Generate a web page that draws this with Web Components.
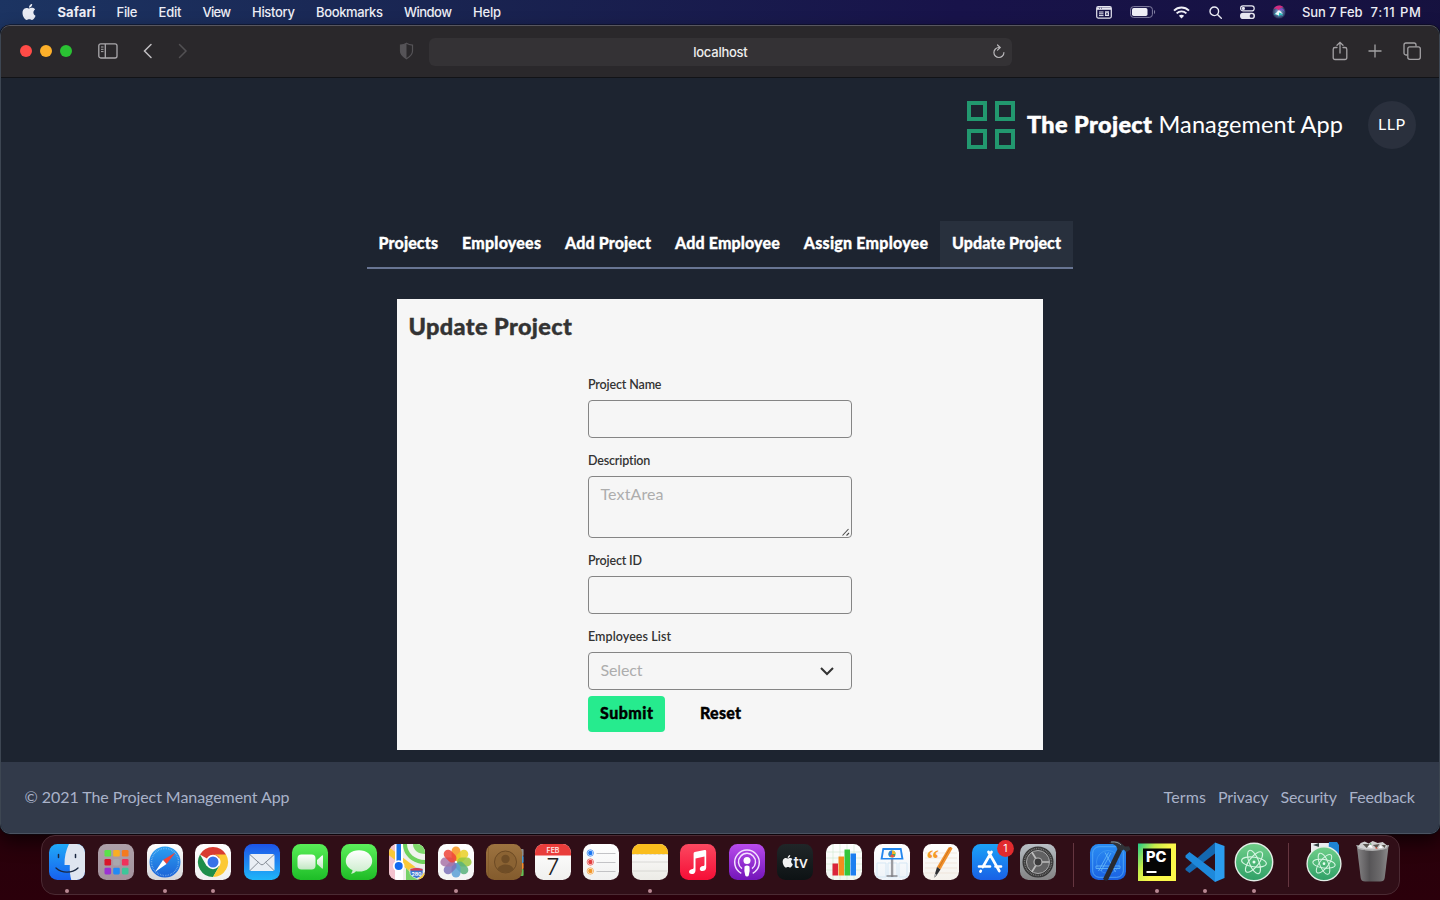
<!DOCTYPE html>
<html lang="en">
<head>
<meta charset="utf-8">
<title>The Project Management App</title>
<style>
html,body{margin:0;width:1440px;height:900px;overflow:hidden}
body{background:linear-gradient(100deg,#1c3462 0,#192350 30%,#18134a 60%,#15113c 100%)}
desktop-screen{font-family:Inter,"Liberation Sans",sans-serif}
</style>
</head>
<body>
<desktop-screen></desktop-screen>
<script>
const APPLE='M12.152 6.896c-.948 0-2.415-1.078-3.96-1.04-2.04.027-3.91 1.183-4.961 3.014-2.117 3.675-.546 9.103 1.519 12.09 1.013 1.454 2.208 3.09 3.792 3.039 1.52-.065 2.09-.987 3.935-.987 1.831 0 2.35.987 3.96.948 1.637-.026 2.676-1.48 3.676-2.948 1.156-1.688 1.636-3.325 1.662-3.415-.039-.013-3.182-1.221-3.22-4.857-.026-3.04 2.48-4.494 2.597-4.559-1.429-2.09-3.623-2.324-4.39-2.376-2-.156-3.675 1.09-4.61 1.09zM15.53 3.83c.843-1.012 1.4-2.427 1.245-3.83-1.207.052-2.662.805-3.532 1.818-.78.896-1.454 2.338-1.273 3.714 1.338.104 2.715-.688 3.559-1.701';

function define(name, html, setup){
  customElements.define(name, class extends HTMLElement{
    constructor(){
      super();
      this.attachShadow({mode:'open'}).innerHTML=html;
    }
    connectedCallback(){ if(setup) setup.call(this,this.shadowRoot); }
  });
}

/* One line of text, tracked so that it fills the width given in "w". */
define('fit-text','<style>:host{display:inline-block;white-space:nowrap;flex:none}span{display:inline-block}</style><span><slot></slot></span>',function(root){
  const w=parseFloat(this.getAttribute('w')), s=root.querySelector('span');
  this.style.width=w+'px';
  const n=this.textContent.length-1;
  s.style.letterSpacing='0px';
  const natural=s.getBoundingClientRect().width;
  if(natural && n>0) s.style.letterSpacing=((w-natural)/n).toFixed(3)+'px';
});

define('menu-bar',`<style>
:host{display:flex;height:25px;box-sizing:border-box;padding:0 19px 1px 22px;align-items:center;color:#edeef6;font-size:13px;line-height:22px;font-weight:500}
nav{display:flex;gap:21px;margin-left:21.500px}
.right{display:flex;align-items:center;margin-left:auto}
nav,.clock{margin-top:-1px}
svg{display:block;flex:none}
b{font-weight:700}
</style>
<svg width="14" height="16" viewBox="1.5 0 21 24" fill="#e9ebf3"><path d="${APPLE}"/></svg>
<nav><fit-text w="38"><b>Safari</b></fit-text><fit-text w="21">File</fit-text><fit-text w="23">Edit</fit-text><fit-text w="28.500">View</fit-text><fit-text w="43">History</fit-text><fit-text w="67">Bookmarks</fit-text><fit-text w="48">Window</fit-text><fit-text w="28">Help</fit-text></nav>
<div class="right">
<svg width="16" height="13" viewBox="0 0 16 13" fill="none" stroke="#e6e6f0"><rect x=".7" y=".7" width="14.6" height="11.4" rx="1.5" stroke-width="1.2"/><path d="M1 2.6h14" stroke-width="2.4"/><path d="M3 2.2h1M5 2.2h1" stroke="#333060" stroke-width=".8"/><path d="M3 6h4.5M3 7.8h4.5M3 9.6h4.5" stroke-width="1"/><path d="M9 5.3h4v4.7h-4z" fill="#e6e6f0" stroke="none"/><path d="M10 6.5l2 2.4m0-2.4l-2 2.4" stroke="#1a144a" stroke-width=".8"/></svg>
<svg style="margin-left:18px" width="26" height="12" viewBox="0 0 26 12"><rect x=".6" y=".6" width="21.8" height="10.8" rx="3" fill="none" stroke="#8582a4"/><rect x="2" y="2" width="15.500" height="8" rx="1.7" fill="#efeff6"/><path d="M24 4v4c1.5-.5 1.5-3.500 0-4" fill="#8582a4"/></svg>
<svg style="margin-left:17px" width="17" height="13" viewBox="0 0 17 13" fill="none" stroke="#f0f0f8" stroke-width="1.9"><path d="M1 4.600c4.200-4.200 10.800-4.200 15 0M3.600 7.400c2.800-2.700 7-2.700 9.800 0"/><path d="M8.500 12.500L5.900 9.700c1.500-1.300 3.700-1.300 5.200 0z" fill="#f0f0f8" stroke="none"/></svg>
<svg style="margin-left:19px" width="13" height="13" viewBox="0 0 13 13" fill="none" stroke="#edeef6" stroke-width="1.400"><circle cx="5.300" cy="5.300" r="4.300"/><path d="M8.500 8.500l3.800 3.800" stroke-linecap="round"/></svg>
<svg style="margin-left:18px" width="15" height="14" viewBox="0 0 15 14"><rect x=".6" y=".9" width="13.600" height="5" rx="2.500" fill="none" stroke="#e9e9f2" stroke-width="1.200"/><circle cx="3.400" cy="3.400" r="1.600" fill="#e9e9f2"/><rect y="7.800" width="15" height="6.200" rx="3.100" fill="#e9e9f2"/><circle cx="11.600" cy="10.900" r="1.900" fill="#28234f"/></svg>
<svg style="margin-left:17px" width="14" height="14" viewBox="0 0 14 14"><defs><radialGradient id="si"><stop offset="0" stop-color="#fff"/><stop offset=".35" stop-color="#6f8dbd"/><stop offset="1" stop-color="#27345a"/></radialGradient></defs><circle cx="7" cy="7" r="6.600" fill="url(#si)"/><path d="M7 6C5 3 2.500 3 1.500 4.500 3 0 9 -.5 11.500 2.500 9 2 7 4 7 6z" fill="#d22a81"/><path d="M7 7c2-3 4-2 5.500 0-1-5-5-5-5.500 0" fill="#7e52ca"/><path d="M7 7c-3 0-4 1-5 3 3-2 4 0 5 2 0-2 2-3 4-1-1-3-2-4-4-4" fill="#25c7c2"/><path d="M3 9l4-4 4 4-4-1.500v3z" fill="#fff" opacity=".9"/></svg>
<fit-text class="clock" w="60.500" style="margin-left:16px">Sun 7 Feb</fit-text><fit-text class="clock" w="50.500" style="margin-left:8px">7:11 PM</fit-text>
</div>`);

define('browser-toolbar',`<style>
:host{display:flex;align-items:center;height:51px;background:#2a282b;border-bottom:1px solid #121317;padding:0 17px 0 19px;box-sizing:content-box}
svg{display:block;flex:none;position:relative;top:-1px}
i{width:12px;height:12px;border-radius:50%;margin-right:8px;margin-top:-1px;flex:none}
.url{width:583px;height:28px;border-radius:6px;background:#343235;margin-left:15px;display:grid;grid-template-columns:30px 1fr 30px;align-items:center;justify-items:center;color:#eee;font-size:13px;font-weight:500;line-height:28px}
.url svg{top:0}
</style>
<i style="background:#ff4b47"></i><i style="background:#fdb02a"></i><i style="background:#2ac233"></i>
<svg style="margin-left:18px" width="20" height="16" viewBox="0 0 20 16" fill="none" stroke="#aaa8ac" stroke-width="1.300"><rect x=".8" y=".8" width="18.200" height="14.200" rx="2"/><path d="M7.300 1v14"/><path d="M3 4h2.500M3 6.300h2.500M3 8.600h2.500" stroke-width="1"/></svg>
<svg style="margin-left:24.500px" width="10" height="16" viewBox="0 0 10 16" fill="none" stroke="#c1bfc2" stroke-width="1.500" stroke-linecap="round"><path d="M8 1.500L1.500 8 8 14.500"/></svg>
<svg style="margin-left:25px" width="10" height="16" viewBox="0 0 10 16" fill="none" stroke="#525053" stroke-width="1.500" stroke-linecap="round"><path d="M1.500 1.500L8 8l-6.500 6.500"/></svg>
<svg style="margin-left:211px" width="15" height="18" viewBox="0 0 15 18"><path d="M7.500 1.200c2 1.300 3.800 1.700 6 1.900v6c0 4-3 6-6 7.600-3-1.600-6-3.600-6-7.600v-6c2.200-.2 4-.6 6-1.900z" fill="none" stroke="#555357" stroke-width="1.200"/><path d="M7.500 1.200v15.500c-3-1.600-6-3.600-6-7.600v-6c2.200-.2 4-.6 6-1.900z" fill="#555357"/></svg>
<div class="url"><span></span><fit-text w="54.500" style="margin-left:1px">localhost</fit-text><svg style="margin-left:5px" width="14" height="16" viewBox="0 0 14 16" fill="none" stroke="#b9b7ba" stroke-width="1.200" stroke-linecap="round" stroke-linejoin="round"><path d="M11.900 8.500a5 5 0 1 1-5-5h1"/><path d="M5.500 1l2.700 2.500-2.700 2.600"/></svg></div>
<svg style="margin-left:320.500px" width="16" height="20" viewBox="0 0 16 20" fill="none" stroke="#a3a1a4" stroke-width="1.300" stroke-linecap="round"><path d="M5 6.500H3A1.800 1.800 0 0 0 1.200 8.300v8.400A1.800 1.800 0 0 0 3 18.500h10a1.800 1.800 0 0 0 1.800-1.800V8.300A1.800 1.800 0 0 0 13 6.500h-2M8 12V1.500M5 4.300l3-3 3 3"/></svg>
<svg style="margin-left:20px" width="14" height="14" viewBox="0 0 14 14" stroke="#a3a1a4" stroke-width="1.300"><path d="M7 .5v13M.5 7h13"/></svg>
<svg style="margin-left:21px" width="18" height="18" viewBox="0 0 18 18" fill="none" stroke="#a3a1a4" stroke-width="1.300"><rect x="4.800" y="4.800" width="12.500" height="12.500" rx="2"/><path d="M4.500 13H3a2 2 0 0 1-2-2V3a2 2 0 0 1 2-2h8a2 2 0 0 1 2 2v1.500"/></svg>`);

define('app-header',`<style>
:host{display:flex;justify-content:flex-end;align-items:center;height:48px;padding:23px 23.500px 0 0;color:#fff;font-size:23.500px;line-height:46px}
.mark{display:grid;grid-template-columns:20px 20px;gap:8px;margin-right:12.500px}
.mark i{height:20px;box-sizing:border-box;border:4px solid #22986f}
fit-text{margin-bottom:2px}
b{font-weight:900;-webkit-text-stroke:.5px #fff}
.avatar{width:48px;height:48px;border-radius:50%;background:#2a303d;margin-left:24.500px;text-align:center;font-size:16px;line-height:46px}
</style><div class="mark"><i></i><i></i><i></i><i></i></div><fit-text w="125"><b>The Project</b></fit-text><fit-text w="184.500" style="margin-left:6.500px">Management App</fit-text><div class="avatar"><fit-text w="27">LLP</fit-text></div>`);

define('tab-item',`<style>:host{display:block;padding:0 12px;height:46px;line-height:43px;font-size:16px;font-weight:900;-webkit-text-stroke:.3px #fff;color:#fff}:host([active]){background:#28303d}</style><slot></slot>`);
define('tab-bar',`<style>:host{display:flex;width:706px;margin:72px auto 0;border-bottom:2px solid #687593}
tab-item:first-of-type{padding-left:11.500px}tab-item:last-of-type{flex:1;padding-right:0}</style>
<tab-item><fit-text w="59.500">Projects</fit-text></tab-item><tab-item><fit-text w="79">Employees</fit-text></tab-item><tab-item><fit-text w="86">Add Project</fit-text></tab-item><tab-item><fit-text w="104.800">Add Employee</fit-text></tab-item><tab-item><fit-text w="124.200">Assign Employee</fit-text></tab-item><tab-item active><fit-text w="109">Update Project</fit-text></tab-item>`);

define('form-field',`<style>
:host{display:block;font-size:12.500px}
.label{line-height:21px;height:21px;padding-bottom:5px;color:#333;font-weight:600}
.box{box-sizing:border-box;border:1px solid #858585;border-radius:4px;height:38px;padding:0 12px 0 11.500px;font-size:16px;line-height:34px;color:#adadad;display:flex;justify-content:space-between}
:host([kind=area]) .box{height:62px}
svg{display:none}
:host([kind=area]) .grip{display:block;align-self:flex-end;margin-right:-12px}
:host([kind=select]) .chev{display:block;align-self:center;margin-right:4px}
</style><div class="label"><slot name="label"></slot></div><div class="box"><span><slot></slot></span>
<svg class="grip" width="10" height="10" viewBox="0 0 10 10" stroke="#4a4a4a" stroke-width="1.100"><path d="M1.500 8.500l6-6.500M5.500 8.500l2.500-2.500"/></svg>
<svg class="chev" width="16" height="12" viewBox="0 0 16 12" fill="none" stroke="#333" stroke-width="2"><path d="M2 3l6 6 6-6"/></svg></div>`);

define('update-form',`<style>
:host{display:block;width:646px;height:451px;box-sizing:border-box;margin:30px auto 0;background:#f6f6f6;color:#333;overflow:hidden;padding-top:10px}
h2{margin:0 0 0 11.500px;font-size:23.500px;font-weight:900;line-height:34px;height:36px;-webkit-text-stroke:.4px #333}
form{width:264px;margin:29px auto 0}
form-field{margin-bottom:12px}
form-field:last-of-type{margin-bottom:6px}
.actions{display:flex;align-items:flex-start;color:#000;font-size:16px;font-weight:900;line-height:34px;-webkit-text-stroke:.4px #000}
.submit{width:77px;height:36px;border-radius:4px;background:#26eb8e;text-align:center}
.reset{margin-left:35px}
</style><h2><fit-text w="163.500">Update Project</fit-text></h2>
<form>
<form-field><fit-text slot="label" w="73.500">Project Name</fit-text></form-field>
<form-field kind="area"><fit-text slot="label" w="62.500">Description</fit-text><fit-text w="63">TextArea</fit-text></form-field>
<form-field><fit-text slot="label" w="54">Project ID</fit-text></form-field>
<form-field kind="select"><fit-text slot="label" w="83">Employees List</fit-text><fit-text w="42">Select</fit-text></form-field>
<div class="actions"><div class="submit"><fit-text w="53">Submit</fit-text></div><div class="reset"><fit-text w="41">Reset</fit-text></div></div>
</form>`);

define('app-footer',`<style>
:host{display:flex;align-items:flex-start;justify-content:space-between;height:72px;padding:0 24px 0 23.500px;background:#323a4a;color:#a9b2c9;font-size:16px;line-height:70px;margin-top:12px}
div{display:flex;gap:12px}
</style><fit-text w="265">© 2021 The Project Management App</fit-text><div><fit-text w="42.500">Terms</fit-text><fit-text w="50.500">Privacy</fit-text><fit-text w="56.500">Security</fit-text><fit-text w="66">Feedback</fit-text></div>`);

define('browser-window',`<style>
:host{display:block;height:809px;box-sizing:border-box;border:1px solid #4b4a55;border-color:#57565f #3d4652 #4b5362;border-radius:10px;overflow:hidden;background:#1d2430;box-shadow:0 0 0 .5px #090b14,0 8px 18px rgba(0,0,0,.6)}
.page{font-family:Lato,"Open Sans",sans-serif}
</style><browser-toolbar></browser-toolbar><div class="page"><app-header></app-header><tab-bar></tab-bar><update-form></update-form><app-footer></app-footer></div>`);

const grad=(id,a,b)=>`<defs><linearGradient id="${id}" x2="0" y2="1"><stop stop-color="${a}"/><stop offset="1" stop-color="${b}"/></linearGradient></defs>`;
const tile=(id,a,b)=>grad(id,a,b)+`<rect width="36" height="36" rx="8.500" fill="url(#${id})"/>`;
const clip='<defs><clipPath id="tile"><rect width="36" height="36" rx="8.500"/></clipPath></defs>';
const ATOM=`<g fill="none" stroke="#d6f5e2" stroke-width="1.100"><ellipse cx="18" cy="18" rx="12.500" ry="4.800" transform="rotate(8 18 18)"/><ellipse cx="18" cy="18" rx="12.500" ry="4.800" transform="rotate(68 18 18)"/><ellipse cx="18" cy="18" rx="12.500" ry="4.800" transform="rotate(128 18 18)"/></g><circle cx="18" cy="18" r="1.500" fill="#e8fff1"/>`;
const petals=['#f7941e','#e9cf25','#9bc83c','#58b27b','#5a9fd6','#7c72b8','#a976a8','#ee4438'];
const ICONS={
finder:clip+tile('g','#20a9f8','#1760ee')+`<g clip-path="url(#tile)"><path d="M20 0C17 6 15.300 13 15.500 21h5.300c-.2 6 .3 11 1.500 15H36V0z" fill="#dfe5f0"/></g><path d="M9.500 10.500v3M26.500 10.500v3" stroke="#1a2740" stroke-width="1.500" stroke-linecap="round"/><path d="M7 24c6 5.500 16 5.500 22 0" fill="none" stroke="#1a2740" stroke-width="1.300" stroke-linecap="round"/>`,
launchpad:tile('g','#aea0a9','#a3929d')+['#5ae149','#f9ae24','#f47a20','#d9152b','#a9a7ad','#f0315b','#9b31d3','#218af5','#3cc69a'].map((c,i)=>`<rect x="${6.500+(i%3)*8.700}" y="${6+Math.floor(i/3)*8.900}" width="6.600" height="6.600" rx="1.300" fill="${c}"/>`).join(''),
safari:tile('g','#fff','#d5d5d8')+grad('s','#2ba0f1','#1c62d7')+`<circle cx="18" cy="18" r="15.500" fill="url(#s)"/><circle cx="18" cy="18" r="13.500" fill="none" stroke="#a6d3f7" stroke-width="1.500" stroke-dasharray=".6 1.100" opacity=".7"/><path d="M28.500 8.500L19.500 20 16 16z" fill="#f44336"/><path d="M8 28l8-12 3.500 4z" fill="#fff"/>`,
chrome:tile('g','#fff','#f0f0f0')+`<path d="M18 18L5 10.500A15 15 0 0 1 31 10.500z" fill="#d93c32"/><path d="M5 10.500A15 15 0 0 0 18 33l6.500-11.200L11.500 21.700z" fill="#1e8e4a"/><path d="M18 33l6.500-11.200A7.500 7.500 0 0 0 18 10.500h13A15 15 0 0 1 18 33" fill="#fcc934"/><circle cx="18" cy="18" r="7.200" fill="#fff"/><circle cx="18" cy="18" r="5.500" fill="#3872e8"/>`,
mail:tile('g','#1d54e8','#1fb6f9')+`<rect x="5.500" y="10" width="25" height="17" rx="1.800" fill="#e9eef4"/><path d="M6 10.700l10.500 9.500q1.500 1.300 3 0L30 10.700M6 26.500l8.500-8.300M30 26.500l-8.500-8.300" fill="none" stroke="#858c96" stroke-width="1"/>`,
facetime:tile('g','#59ee57','#1dbd27')+grad('s','#fff','#c2e7c3')+`<rect x="5.500" y="10.500" width="18" height="15" rx="4" fill="url(#s)"/><path d="M25 16l5-4.500q1-.5 1 .8v11.400q0 1.300-1 .8l-5-4.500z" fill="url(#s)"/>`,
messages:tile('g','#5cf05b','#1ebb25')+grad('s','#fff','#caeccb')+`<path d="M18 6.200c7.600 0 13.200 4.700 13.200 10.700S25.600 27.600 18 27.600c-1 0-2-.1-3-.3-1.200 1.300-3 2.300-5 2.400.9-.9 1.500-2.200 1.500-3.600-4-1.800-6.700-5.100-6.700-9.200C4.800 10.900 10.400 6.200 18 6.200z" fill="url(#s)"/>`,
maps:clip+`<g clip-path="url(#tile)"><rect width="36" height="36" fill="#eeeeeb"/><path d="M0 0h9v36H0z" fill="#f3c2ce"/><path d="M14 0h22v20C24 20 14 12 14 0z" fill="#6ed25c"/><path d="M18 0h18v16C26 16 18 9 18 0z" fill="#f1f3ee"/><path d="M24 0h12v10c-7 0-12-4-12-10z" fill="#7fd96b"/><path d="M-2 4l40 31v-9L-2-4z" fill="#f9c938" transform="translate(-1 5)"/><path d="M17 36V24l12 12" fill="#76d267"/><path d="M6 0h8v36H6z" fill="#fff"/><path d="M7.500 0h4.500v20H7.500z" fill="#1a73e8"/></g><circle cx="9.700" cy="22" r="5.800" fill="#fff"/><circle cx="9.700" cy="22" r="4" fill="#1268f0"/><path d="M21 25q6-2.500 13 0v4q0 3-6.500 5.500-6.500-2.500-6.500-5.500z" fill="#3975d0" stroke="#e6edf7" stroke-width=".7"/><path d="M21.500 25q6-2 12 0v1.500h-12z" fill="#da3950"/><text x="27.500" y="31.600" text-anchor="middle" font-size="5.200" font-weight="700" fill="#fff">280</text>`,
photos:tile('g','#fff','#f3f3f3')+petals.map((c,i)=>`<rect x="13.600" y="2.400" width="8.800" height="14.500" rx="4.400" fill="${c}" opacity=".85" transform="rotate(${i*45} 18 18)"/>`).join(''),
contacts:`<rect x="30" y="5" width="7.600" height="7" rx="1" fill="#8e8e8e"/><rect x="30" y="12" width="7.600" height="7" rx="1" fill="#4999d3"/><rect x="30" y="19" width="7.600" height="6" rx="1" fill="#ef8b2e"/><rect x="30" y="25" width="7.600" height="7" rx="1" fill="#63bf55"/>`+tile('g','#9d7340','#835b2d')+`<path d="M2.500 3v30" stroke="#805727" stroke-width="1" opacity=".6"/><circle cx="19.500" cy="18" r="11" fill="#8b6333" stroke="#6c4a24"/><circle cx="19.500" cy="15" r="4.200" fill="#6f4d26"/><path d="M11.500 25c2-6 14-6 16 0-4 5-12 5-16 0z" fill="#6f4d26"/>`,
calendar:clip+tile('g','#fff','#f0f0ee')+`<path d="M0 0h36v11.500H0z" fill="#e93d3b" clip-path="url(#tile)"/><text x="18" y="9" text-anchor="middle" font-size="7" font-weight="600" fill="#ffe5e3">FEB</text><text x="18" y="30.800" text-anchor="middle" font-size="23" font-weight="300" fill="#222">7</text>`,
reminders:tile('g','#fff','#f0f0f0')+['#1c77f2','#e33c3c','#f2962b'].map((c,i)=>`<circle cx="7.300" cy="${9+9*i}" r="3.200" fill="#fff" stroke="${c}" stroke-width=".7"/><circle cx="7.300" cy="${9+9*i}" r="2.200" fill="${c}"/><path d="M13.500 ${9.500+9*i}h19" stroke="#b5b5b9" stroke-width=".8"/>`).join(''),
notes:clip+tile('g','#fff','#ecebe6')+`<path d="M0 0h36v10H0z" fill="#fabd1d" clip-path="url(#tile)"/><path d="M0 18h36M0 27h36" stroke="#d3d2ce" stroke-width=".8"/><path d="M0 10.500h36" stroke="#b8a56f" stroke-width=".6" stroke-dasharray=".6 .7"/>`,
music:tile('g','#fb4860','#f60e36')+`<path d="M13.600 9.600q0-1.200 1.200-1.500l9.800-2q1.600-.3 1.600 1.200v16.200c0 2.300-1.800 3.600-3.700 3.600-1.800 0-2.700-1-2.700-2.200 0-1.700 1.300-2.500 3.200-2.800 1.200-.2 1.500-.6 1.500-1.600V12.600l-9 1.800v12c0 2.300-1.700 3.700-3.700 3.700-1.700 0-2.700-1-2.700-2.300 0-1.600 1.300-2.400 3.200-2.800 1-.2 1.300-.6 1.300-1.600z" fill="#fff"/>`,
podcasts:tile('g','#b94bed','#7315b9')+`<g fill="none" stroke="#f4e2ff" stroke-width="1.500"><path d="M12.300 29.300a12.300 12.300 0 1 1 11.400 0M13 24.700a8.500 8.500 0 1 1 10 0"/></g><circle cx="18" cy="16.500" r="3.500" fill="#fff"/><path d="M15.500 22.500q2.500-1.800 5 0 .7 5-.8 9-.2 1-1.700 1t-1.700-1q-1.500-4-.8-9z" fill="#fff"/>`,
tv:tile('g','#202628','#0d1214')+`<path d="${APPLE}" fill="#f2f2f2" transform="translate(4.500 11) scale(.52)"/><text x="16.500" y="23.600" font-size="16" font-weight="500" textLength="14.500" fill="#f2f2f2">tv</text>`,
numbers:tile('g','#fff','#f1f5ef')+`<path d="M0 8h36M0 14h36M0 20h36M0 26h36M7 0v36M14 0v36M21 0v36M28 0v36" stroke="#cfe7cc" stroke-width=".6"/><path d="M6.500 19.500h5.500v12H6.500z" fill="#db2439"/><path d="M12.500 12.500h5.500v19h-5.500z" fill="#f58c1e"/><path d="M18.500 5.500h5.500v26h-5.500z" fill="#35c63b"/><path d="M24.500 9.500H30v22h-5.500z" fill="#1d7ff0"/>`,
keynote:tile('g','#fff','#eef3f8')+`<path d="M3 19h9v14H3zM14 19h9v14h-9zM25 19h8v14h-8z" fill="none" stroke="#d5e7f5"/><path d="M16.900 15h2.400v18h-2.400z" fill="#9b9ca1"/><path d="M12.500 32h11" stroke="#7a7b80" stroke-width="1.300"/><path d="M8.500 4h19l2 11.500h-23z" fill="#2186ef"/><path d="M10 6h16l1.300 8H8.700z" fill="#f5f9ff"/><circle cx="18" cy="10" r="3.500" fill="#31b85a"/><path d="M18 10V6.500a3.500 3.500 0 0 1 3.500 3.500z" fill="#f6b528"/><path d="M18 10l-2.500 2.500A3.500 3.500 0 0 1 18 6.500z" fill="#2f7de0"/><path d="M18 10l3 2a3.500 3.500 0 0 1-5 .3z" fill="#ef4e47"/>`,
pages:tile('g','#fff','#f4f1ec')+`<path d="M2 9h32M2 14h32M2 19h32M2 24h32M2 29h32" stroke="#eddccd" stroke-width=".6"/><text x="3.500" y="22.500" font-size="25" font-weight="700" font-family="Liberation Serif,serif" fill="#f59a2b">“</text><path d="M25.500 3.500q3-1.500 4 1L17.500 25.500 14 23z" fill="#f1912d"/><path d="M27.500 3.200L15.700 24" stroke="#c56c18" stroke-width=".8"/><path d="M14 23l3.500 2.500-4 6-2.200 2.200.7-4z" fill="#2d2f33"/><path d="M12.500 29.500l-1.800 4 3-2.500z" fill="#bbb"/>`,
appstore:tile('g','#1ba2f7','#1961e6')+`<g stroke="#fff" stroke-width="2.700" stroke-linecap="round" fill="none"><path d="M19.500 8L10.800 23M16.500 8l10.800 19M7 22.500h11M23.500 22.500H29M8.800 26.800l-.4.700"/></g><circle cx="33.500" cy="4.500" r="8.400" fill="#e22b2e"/><text x="33.500" y="8" text-anchor="middle" font-size="10.500" fill="#fff">1</text>`,
prefs:tile('g','#b8bfc5','#838384')+`<circle cx="18" cy="18" r="15.500" fill="#373737"/><circle cx="18" cy="18" r="13.500" fill="none" stroke="#a2a2a2" stroke-width="1.500" stroke-dasharray="1 .8" opacity=".6"/><circle cx="18" cy="18" r="11.500" fill="#626263" stroke="#a9a9aa" stroke-width="1"/><path d="M18 18L11.800 8M18 18h11M18 18L11.800 28" stroke="#bcbcbc" stroke-width="1.700"/><circle cx="18" cy="18" r="4" fill="#3b3b3c" stroke="#b5b5b5" stroke-width="1.200"/>`,
xcode:tile('g','#2a8df3','#1a61e2')+`<rect x="2.700" y="2.700" width="30.600" height="30.600" rx="6.500" fill="none" stroke="#59adf7" stroke-width=".8"/><g stroke="#6cc0fb" stroke-width=".9" fill="none" opacity=".85"><circle cx="18" cy="18" r="11.500" opacity=".4"/><path d="M18.500 8.500L8.500 27M15 8.500L25.500 28M6 22h24v2.500H6zM21 9L11 27"/></g><path d="M28 4l4 3-14 29q-2 2-5-1z" fill="#282a30"/><path d="M19.500-2q8-2.500 12 1.500l3.500 3 4-.2 1.500 3.200-4 2.500-3-2.500-1.500 1.600-5-2.500q0-4-7.500-5.500z" fill="#303338"/><path d="M21-2q7-.6 10 3" stroke="#91959a" fill="none"/>`,
pycharm:`<defs><linearGradient id="g" x1="0" y1="0" x2="1" y2=".6"><stop stop-color="#20ca88"/><stop offset=".35" stop-color="#c7ed4b"/><stop offset=".65" stop-color="#fcf84a"/></linearGradient></defs><rect x="-1" y="-.5" width="38" height="37.500" fill="url(#g)"/><rect x="4" y="4.500" width="28" height="27.500" fill="#050505"/><text x="7" y="18.200" font-size="14" font-weight="800" textLength="20.500" lengthAdjust="spacingAndGlyphs" fill="#fff">PC</text><path d="M7.500 28h10" stroke="#fff" stroke-width="2"/>`,
vscode:`<path d="M-1.500 24.500L28-1.500v11L2.500 29-1.500 26z" fill="#1468b0"/><path d="M-1.500 11.500L2.500 8 28 27v11L-1.500 13.500z" fill="#1e89db"/><path d="M28-1.500l9.500 3.500v32L28 38z" fill="#2b9cef"/>`,
atom:grad('g','#70cf89','#2fa067')+`<circle cx="18" cy="18" r="18.700" fill="url(#g)" stroke="#e4eee7" stroke-width="1.400"/>`+ATOM,
atomdoc:`<path d="M5-1h18v14H5z" fill="#e9edef"/><path d="M7 1l6-2v4z" fill="#344"/><path d="M23-2h8l2 3v11H22z" fill="#1e83d4"/>`+grad('g','#70cf89','#2fa067')+`<g transform="translate(1.800 3.500) scale(.9)"><circle cx="18" cy="18" r="18.800" fill="url(#g)" stroke="#e4eee7" stroke-width="1.500"/>${ATOM}</g>`,
trash:`<defs><linearGradient id="g"><stop stop-color="#8b8b8c"/><stop offset=".4" stop-color="#59595b"/><stop offset=".75" stop-color="#707071"/><stop offset="1" stop-color="#929293"/></linearGradient></defs><g transform="translate(.7 0)"><path d="M2 1h32l-4 33q-.5 3.500-4.500 3.500h-15Q6.500 37.500 6 34z" fill="url(#g)" opacity=".95"/><path d="M3 3l3-4 4-1.500 4 2 4-2.500 5 2 5-1 5 4-1 2.500q-13 4-28 .5z" fill="#cfcfcf"/><path d="M8 0l4 4 3-4zM18 1l4 3 3-4zM27 1l3 3 1-3z" fill="#5b5650"/><path d="M13 3l3-3 2 4zM24 4l2-3 2 3z" fill="#fff"/><path d="M15-1l2 1-1 1z" fill="#378f52"/><path d="M20 4l2-1 1 2z" fill="#c8442e"/><path d="M2 1q0 5 16 5T34 1" fill="none" stroke="#a5a5a6" stroke-width="1"/></g>`
};

define('dock-icon',`<style>:host{display:flex;flex:none;flex-direction:column;align-items:center;width:48.540px;height:100%;box-sizing:border-box;padding-top:8.300px}
svg{display:block;overflow:visible;font-family:Inter,sans-serif}
i{width:4px;height:4px;border-radius:50%;margin-top:8.500px}
:host([running]) i{background:#b98893}</style><svg width="36" height="36" viewBox="0 0 36 36"></svg><i></i>`,function(root){
  root.querySelector('svg').innerHTML=ICONS[this.getAttribute('name')];
});
const running=['finder','safari','chrome','photos','notes','pycharm','vscode','atom'];
const order=['finder','launchpad','safari','chrome','mail','facetime','messages','maps','photos','contacts','calendar','reminders','notes','music','podcasts','tv','numbers','keynote','pages','appstore','prefs','|','xcode','pycharm','vscode','atom','|','atomdoc','trash'];
define('app-dock',`<style>
:host{display:flex;width:1359px;height:60px;box-sizing:border-box;margin:1px auto 0;border:1px solid #4b2a33;border-radius:14px;background:#300e17;padding:0 0 0 1.700px}
hr{border:0;width:1px;height:44px;margin:7px 10px 0 10.400px;background:#653640;flex:none}
</style>`+order.map(n=>n==='|'?'<hr>':`<dock-icon name="${n}"${running.includes(n)?' running':''}></dock-icon>`).join(''));

define('desktop-screen',`<style>
:host{display:flex;flex-direction:column;width:1440px;height:900px}
.desk{flex:1;background:linear-gradient(transparent 0 400px,#190309 400px,#2b000b 875px)}
browser-window{width:1440px}
</style><menu-bar></menu-bar><div class="desk"><browser-window></browser-window><app-dock></app-dock></div>`);
</script>
</body>
</html>
